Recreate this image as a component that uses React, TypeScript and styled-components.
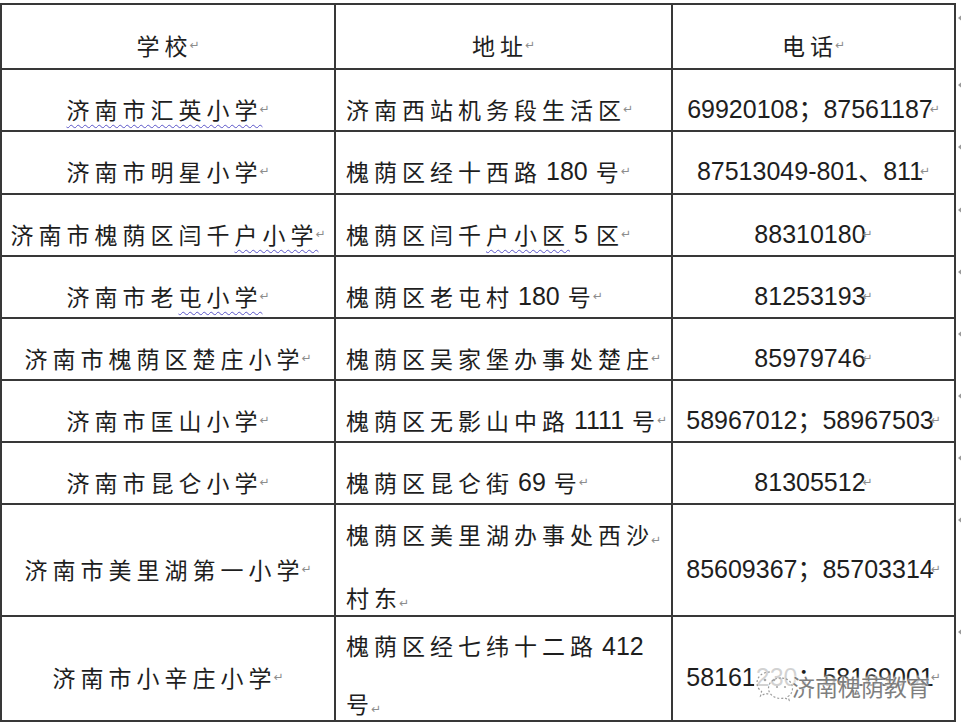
import React from 'react'
import styled, { createGlobalStyle } from 'styled-components'

const GlobalStyle = createGlobalStyle`
  body {
    margin: 0;
    background: #ffffff;
  }
`

const LINE = '#383838'

const Page = styled.div`
  width: 961px;
  height: 727px;
  overflow: hidden;
  padding-top: 3px;
  box-sizing: border-box;
  font-family: 'Noto Sans CJK SC', sans-serif;
  color: #1e1e1e;
`

const Row = styled.div<{ $height: number; $first?: boolean }>`
  display: grid;
  grid-template-columns: 336px 337px 283px 1fr;
  grid-template-rows: ${(p) => p.$height}px;
  height: ${(p) => p.$height}px;

  & > div:not(:last-child) {
    border-top: ${(p) => (p.$first ? `2px solid ${LINE}` : 'none')};
  }
`

const Cell = styled.div<{ $left?: boolean; $mono?: boolean }>`
  position: relative;
  min-height: 0;
  display: flex;
  align-items: center;
  justify-content: ${(p) => (p.$left ? 'flex-start' : 'center')};
  box-sizing: border-box;
  padding: 18px 2px 0 ${(p) => (p.$left ? '10px' : '2px')};
  border-right: 2px solid ${LINE};
  border-bottom: 2px solid ${LINE};
  line-height: 57px;
  font-size: 23px;
  letter-spacing: 5px;
  white-space: nowrap;

  &:first-child {
    border-left: 2px solid ${LINE};
  }

  ${(p) =>
    p.$mono &&
    `
    font-family: 'Liberation Sans', 'Noto Sans CJK SC', sans-serif;
    font-size: 25px;
    letter-spacing: 0;
  `}
`

const Lines = styled.div`
  display: flex;
  flex-direction: column;
`

const Num = styled.span`
  font-family: 'Liberation Sans', sans-serif;
  font-size: 25px;
  letter-spacing: 0;
  margin: 0 8px 0 4px;
`

const Wavy = styled.span`
  text-decoration: underline wavy #5a55c8;
  text-decoration-thickness: 1px;
  text-underline-offset: 5px;
`

const Mark = styled.span`
  font-family: 'DejaVu Sans', sans-serif;
  font-size: 12px;
  letter-spacing: 0;
  color: #8c8c8c;
  margin-left: -3px;
`

const RowEnd = styled.div`
  padding: 11px 0 0 2px;
`

const Triangle = styled.div`
  width: 0;
  height: 0;
  border-top: 4px solid transparent;
  border-bottom: 4px solid transparent;
  border-right: 5px solid #9a9a9a;
`

const Watermark = styled.div`
  position: absolute;
  right: 24px;
  bottom: 14px;
  display: flex;
  align-items: center;
  font-family: 'Noto Sans CJK SC', sans-serif;
  font-size: 23px;
  letter-spacing: 0;
  line-height: 30px;
  color: #7e7e7e;
  text-shadow: 0 0 2px #fff, 0 0 3px #fff, 0 0 5px #fff;
`

const WatermarkIcon = () => (
  <svg width="44" height="40" viewBox="0 0 44 40" style={{ marginRight: -6 }}>
    <rect x="0" y="0" width="44" height="40" fill="rgba(255,255,255,0.8)" rx="10" />
    <g fill="none" stroke="#9a9a9a" strokeWidth="1.2" strokeDasharray="2 2">
      <path d="M16 6c-8 0-13 5-13 11 0 3.5 1.8 6.5 4.6 8.4L6.5 30l5-2.6c1.4.4 2.9.6 4.5.6" />
      <path d="M27 12c-7.5 0-12.5 4.6-12.5 10.2S19.5 32.4 27 32.4c1.3 0 2.6-.2 3.8-.5l4.3 2.3-1-3.7c2.8-1.9 4.4-4.7 4.4-8.3C38.5 16.6 34 12 27 12z" />
    </g>
    <g fill="#a8a8a8">
      <circle cx="11" cy="14" r="1.3" />
      <circle cx="20" cy="14" r="1.3" />
      <circle cx="23" cy="21" r="1.1" />
      <circle cx="31" cy="21" r="1.1" />
    </g>
  </svg>
)

const P = () => <Mark>↵</Mark>

interface RowData {
  height: number
  name: React.ReactNode
  address: React.ReactNode
  phone: React.ReactNode
  watermark?: boolean
}

const rows: RowData[] = [
  {
    height: 62,
    name: <Wavy>济南市汇英小学</Wavy>,
    address: <>济南西站机务段生活区</>,
    phone: <>69920108；87561187</>,
  },
  {
    height: 63,
    name: <>济南市明星小学</>,
    address: (
      <>
        槐荫区经十西路<Num>180</Num>号
      </>
    ),
    phone: <>87513049-801、811</>,
  },
  {
    height: 62,
    name: (
      <>
        济南市槐荫区闫千<Wavy>户小学</Wavy>
      </>
    ),
    address: (
      <>
        槐荫区闫千<Wavy>户小区</Wavy>
        <Num>5</Num>区
      </>
    ),
    phone: <>88310180</>,
  },
  {
    height: 62,
    name: (
      <>
        济南市老<Wavy>屯小学</Wavy>
      </>
    ),
    address: (
      <>
        槐荫区老屯村<Num>180</Num>号
      </>
    ),
    phone: <>81253193</>,
  },
  {
    height: 62,
    name: <>济南市槐荫区楚庄小学</>,
    address: <>槐荫区吴家堡办事处楚庄</>,
    phone: <>85979746</>,
  },
  {
    height: 62,
    name: <>济南市匡山小学</>,
    address: (
      <>
        槐荫区无影山中路<Num>1111</Num>号
      </>
    ),
    phone: <>58967012；58967503</>,
  },
  {
    height: 62,
    name: <>济南市昆仑小学</>,
    address: (
      <>
        槐荫区昆仑街<Num>69</Num>号
      </>
    ),
    phone: <>81305512</>,
  },
  {
    height: 112,
    name: <>济南市美里湖第一小学</>,
    address: (
      <Lines>
        <span>
          槐荫区美里湖办事处西沙
          <P />
        </span>
        <span>
          村东
          <P />
        </span>
      </Lines>
    ),
    phone: <>85609367；85703314</>,
  },
  {
    height: 105,
    name: <>济南市小辛庄小学</>,
    address: (
      <Lines>
        <span>
          槐荫区经七纬十二路<Num>412</Num>
        </span>
        <span>
          号
          <P />
        </span>
      </Lines>
    ),
    phone: <>58161230；58169001</>,
    watermark: true,
  },
]

const App: React.FC = () => {
  return (
    <Page>
      <GlobalStyle />
      <Row $height={67} $first>
        <Cell>
          学校
          <P />
        </Cell>
        <Cell>
          地址
          <P />
        </Cell>
        <Cell>
          电话
          <P />
        </Cell>
        <RowEnd>
          <Triangle />
        </RowEnd>
      </Row>
      {rows.map((row, i) => {
        const multiline = row.height > 70
        return (
          <Row key={i} $height={row.height}>
            <Cell>
              {row.name}
              <P />
            </Cell>
            <Cell $left>
              {row.address}
              {!multiline && <P />}
            </Cell>
            <Cell $mono>
              {row.phone}
              <P />
              {row.watermark && (
                <Watermark>
                  <WatermarkIcon />
                  济南槐荫教育
                </Watermark>
              )}
            </Cell>
            <RowEnd>
              <Triangle />
            </RowEnd>
          </Row>
        )
      })}
    </Page>
  )
}

export default App
